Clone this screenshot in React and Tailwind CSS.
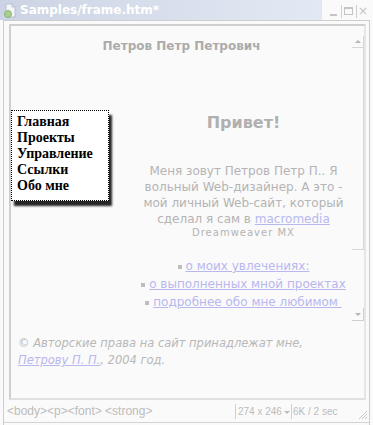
// Faded Dreamweaver document window showing a framed "homepage" sample.

const sans = { fontFamily: '"DejaVu Sans", Verdana, sans-serif' };
const arial = { fontFamily: '"Liberation Sans", Arial, sans-serif' };
const serif = { fontFamily: '"Liberation Serif", "Times New Roman", serif' };

const DocIcon = () => (
    <svg width="14" height="15" viewBox="0 0 14 15">
        <path d="M3 1h6l3 3v10H3z" fill="#f4f6fa" stroke="#b9c0cf" />
        <path d="M9 1v3h3" fill="none" stroke="#b9c0cf" />
        <circle cx="5" cy="11" r="3.5" fill="#a9cf8f" stroke="#8cb271" />
    </svg>
);

const TitleBar = () => (
    <div className="flex h-[20px]">
        <div className="flex items-center w-[322px] bg-gradient-to-r from-[#ccd3e4] via-[#d8dfec] to-[#e3e9f4] pl-[3px]">
            <DocIcon />
            <span className="ml-[3px] text-white font-bold text-[12px] leading-none" style={sans}>Samples/frame.htm*</span>
        </div>
        <div className="flex-1 flex items-center justify-end gap-[2px] pr-[4px] pt-[2px]">
            <div className="w-[12px] h-[13px] flex items-end justify-center pb-[2px]">
                <div className="w-[7px] h-[2px] bg-[#c4c4c4]" />
            </div>
            <div className="w-[13px] h-[13px] border-l border-[#cfcfcf] flex items-center justify-center">
                <div className="w-[9px] h-[8px] border border-t-2 border-[#c4c4c4]" />
            </div>
            <div className="w-[13px] h-[13px] border-l border-[#cfcfcf] flex items-center justify-center text-[#c4c4c4] text-[12px] leading-none" style={sans}>
                ×
            </div>
        </div>
    </div>
);

const Scrollbar = () => (
    <div className="w-[12px] mt-[10px] flex flex-col">
        <div className="h-[12px] border-r border-b border-[#d6d6d6] flex items-center justify-center">
            <div className="w-0 h-0 border-l-[3px] border-r-[3px] border-b-[3px] border-l-transparent border-r-transparent border-b-[#b4b4b4]" />
        </div>
        <div className="h-[202px] border-r border-b border-[#d6d6d6]" />
        <div className="h-[58px]" />
        <div className="h-[13px] border-r border-b border-[#d0d0d0] flex items-center justify-center">
            <div className="w-0 h-0 border-l-[3px] border-r-[3px] border-t-[3px] border-l-transparent border-r-transparent border-t-[#b4b4b4]" />
        </div>
    </div>
);

const NavBox = () => (
    <div className="mt-[51px] w-[98px] h-[91px] bg-white border border-dotted border-black shadow-[3px_5px_2px_rgba(0,0,0,0.85)] pl-[5px] pt-[3px]">
        {['Главная', 'Проекты', 'Управление', 'Ссылки', 'Обо мне'].map((item) => (
            <div key={item} className="text-[14px] leading-[16px] font-bold text-black" style={serif}>{item}</div>
        ))}
    </div>
);

const links = ['о моих увлечениях:', 'о выполненных мной проектах', 'подробнее обо мне любимом\u00a0'];

const MainFrame = () => (
    <div className="flex-1 flex flex-col items-center text-[#b4b4b4]" style={sans}>
        <div className="mt-[54px] text-[16px] leading-[20px] font-bold text-[#b0b0b0]">Привет!</div>
        <p className="mt-[30px] text-[12px] leading-[16px] text-center">
            Меня зовут Петров Петр П.. Я<br />
            вольный Web-дизайнер. А это -<br />
            мой личный Web-сайт, который<br />
            сделал я сам в <span className="text-[#b8b8ee] underline">macromedia</span>
        </p>
        <div className="text-[10px] leading-[12px] tracking-[1px]">Dreamweaver MX</div>
        <ul className="mt-[18px] flex flex-col items-center">
            {links.map((l) => (
                <li key={l} className="flex items-center h-[18px] text-[12px]">
                    <span className="w-[4px] h-[4px] bg-[#bdbdbd] mr-[4px] mt-[2px]" />
                    <span className="text-[#b8b8ee] underline whitespace-pre">{l}</span>
                </li>
            ))}
        </ul>
    </div>
);

const StatusBar = () => (
    <div className="h-[23px] flex items-center text-[#bcbcbc] border-b border-[#d4d4d4] whitespace-nowrap" style={arial}>
        <span className="ml-[3px] text-[12px]">&lt;body&gt;&lt;p&gt;&lt;font&gt; &lt;strong&gt;</span>
        <div className="ml-auto flex items-center shrink-0 text-[10px]">
            <div className="w-[56px] shrink-0 flex items-center border-l border-[#cfcfcf] pl-[2px] h-[15px] leading-[15px]">
                <span>274 x 246</span>
                <span className="ml-[2px] w-0 h-0 border-l-[3px] border-r-[3px] border-t-[3px] border-l-transparent border-r-transparent border-t-[#bcbcbc] mt-[3px]" />
            </div>
            <div className="w-[66px] shrink-0 border-l border-[#cfcfcf] pl-[1px] h-[15px] leading-[15px]">6K / 2 sec</div>
            <svg className="mr-[1px] mt-[6px] shrink-0" width="11" height="11" viewBox="0 0 11 11">
                <path d="M10 2L2 10M10 5L5 10M10 8L8 10" stroke="#c8c8c8" strokeWidth="1" />
            </svg>
        </div>
    </div>
);

export default function App() {
    return (
        <div className="w-[373px] h-[425px] bg-[#fafafa] overflow-hidden flex flex-col">
            <TitleBar />
            <div className="ml-[3px] w-[367px] flex-1 flex flex-col border-l border-r border-t border-[#cdcdcd]">
                <div className="ml-[5px] mt-[3px] w-[357px] h-[376px] border-2 border-[#cfcfcf] border-r-[#e6e6e6] border-b-[#e0e0e0] flex">
                    <div className="flex-1 flex flex-col">
                        <div className="mt-[12px] text-center text-[12px] leading-[16px] font-bold text-[#acacac]" style={sans}>
                            Петров Петр Петрович
                        </div>
                        <div className="flex mt-[5px]">
                            <div className="w-[124px]">
                                <NavBox />
                            </div>
                            <MainFrame />
                        </div>
                        <div className="mt-[24px] pl-[7px] text-[11.5px] leading-[17px] italic text-[#b8b8b8]" style={sans}>
                            © Авторские права на сайт принадлежат мне,<br />
                            <span className="text-[#b8b8ee] underline">Петрову П. П.</span>, 2004 год.
                        </div>
                    </div>
                    <Scrollbar />
                </div>
                <StatusBar />
            </div>
        </div>
    );
}
